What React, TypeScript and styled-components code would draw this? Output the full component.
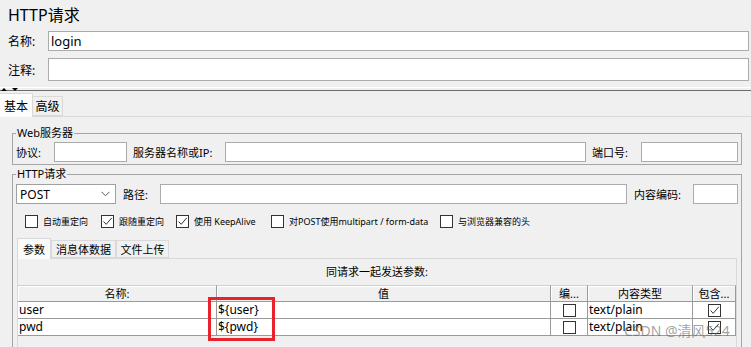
import styled, { createGlobalStyle } from "styled-components";

const GlobalStyle = createGlobalStyle`
  *{box-sizing:border-box;}
  html,body{margin:0;padding:0;overflow:hidden;background:#f0f0f0;}
  body{font-family:"Noto Sans","Noto Sans CJK SC",sans-serif;color:#000;}
`;

const Page = styled.div`
  position:relative;
  width:751px;
  height:347px;
  overflow:hidden;
`;
const Head = styled.div`
  padding:0 2px 0 8px;
`;
const Title = styled.h1`
  margin:0;
  height:30px;
  line-height:30px;
  font-size:16px;
  font-weight:400;
`;
const NameRow = styled.div<{ $mt: number }>`
  display:flex;
  align-items:center;
  margin-top:${(p) => p.$mt}px;
`;
const NameLabel = styled.span`
  width:40px;
  font-size:12px;
  flex:none;
`;
const TextBox = styled.input<{ $h: number; $w?: number }>`
  height:${(p) => p.$h}px;
  ${(p) => (p.$w ? `width:${p.$w}px;flex:none;` : "flex:1;")}
  min-width:0;
  border:1px solid #ababab;
  background:#fff;
  font-family:inherit;
  font-size:13px;
  padding:0 2px;
  outline:none;
  color:#000;
`;
const Splitter = styled.div`
  margin-top:6px;
  height:4px;
  border-top:1px solid #fff;
  border-bottom:1px solid #6b6b6b;
  display:flex;
  gap:5px;
  padding-left:1px;
  align-items:flex-start;
`;
const Arrow = styled.span<{ $up?: boolean }>`
  width:0;
  height:0;
  border-left:3px solid transparent;
  border-right:3px solid transparent;
  ${(p) => (p.$up ? "border-bottom:3px solid #000;" : "border-top:3px solid #000;")}
`;
const TopTabs = styled.div`
  margin-top:2px;
  height:23px;
  display:flex;
  align-items:flex-end;
  position:relative;
  z-index:1;
`;
const TopTab = styled.div<{ $active?: boolean; $w: number }>`
  width:${(p) => p.$w}px;
  height:${(p) => (p.$active ? 24 : 20)}px;
  margin-bottom:${(p) => (p.$active ? -1 : 0)}px;
  background:${(p) => (p.$active ? "#fdfdfd" : "#f0f0f0")};
  border:1px solid #d9d9d9;
  border-left:none;
  border-bottom:${(p) => (p.$active ? "none" : "1px solid #d9d9d9")};
  display:flex;
  align-items:center;
  justify-content:center;
  font-size:12px;
`;
const Panel = styled.div`
  border-top:1px solid #d9d9d9;
  padding:0 9px 0 12px;
`;
const Group = styled.fieldset<{ $mt: number; $pb: number }>`
  margin:${(p) => p.$mt}px 0 0;
  padding:0 3px ${(p) => p.$pb}px;
  border:1px solid #a5a5a5;
  min-width:0;
`;
const GroupTitle = styled.legend`
  padding:0 1px;
  font-size:11px;
  line-height:14px;
`;
const Row = styled.div<{ $mt: number }>`
  display:flex;
  align-items:center;
  height:20px;
  margin-top:${(p) => p.$mt}px;
`;
const FieldLabel = styled.span<{ $w: number; $ml?: number }>`
  width:${(p) => p.$w}px;
  margin-left:${(p) => p.$ml || 0}px;
  flex:none;
  font-size:11px;
  white-space:nowrap;
`;
const Select = styled.div`
  width:100px;
  height:20px;
  flex:none;
  border:1px solid #a0a0a0;
  background:#fff;
  display:flex;
  align-items:center;
  justify-content:space-between;
  padding:0 5px 0 3px;
  font-size:12px;
`;
const CheckRow = styled.div`
  display:flex;
  align-items:center;
  height:16px;
  margin-top:9px;
  padding-left:9px;
`;
const CheckItem = styled.div<{ $w?: number }>`
  display:flex;
  align-items:center;
  gap:5px;
  ${(p) => (p.$w ? `width:${p.$w}px;` : "")}
  flex:none;
  font-size:9px;
  white-space:nowrap;
`;
const Box = styled.span`
  width:13px;
  height:13px;
  flex:none;
  border:1px solid #333;
  background:#fff;
  display:flex;
  align-items:center;
  justify-content:center;
`;
const InnerTabs = styled.div`
  margin:9px 0 0 1px;
  height:20px;
  display:flex;
  align-items:flex-end;
  position:relative;
  z-index:1;
`;
const InnerTab = styled.div<{ $active?: boolean; $w: number }>`
  width:${(p) => p.$w}px;
  height:${(p) => (p.$active ? 21 : 18)}px;
  margin-bottom:${(p) => (p.$active ? -1 : 0)}px;
  background:${(p) => (p.$active ? "#fafafa" : "#f0f0f0")};
  border:1px solid #d9d9d9;
  border-bottom:${(p) => (p.$active ? "none" : "1px solid #d9d9d9")};
  display:flex;
  align-items:center;
  justify-content:center;
  font-size:11px;
`;
const ParamPanel = styled.div`
  margin:0 1px;
  height:130px;
  border:1px solid #d9d9d9;
`;
const Caption = styled.div`
  height:26px;
  line-height:26px;
  text-align:center;
  font-size:11px;
`;
const Table = styled.div`
  position:relative;
  display:grid;
  grid-template-columns:199px 334px 37px 105px 43px;
`;
const HeadCell = styled.div`
  height:17px;
  background:#f0f0f0;
  border-top:1px solid #cfcfcf;
  border-right:1px solid #9a9a9a;
  border-bottom:1px solid #9a9a9a;
  box-shadow:inset 1px 1px 0 #fff;
  font-size:11px;
  line-height:15px;
  text-align:center;
  white-space:nowrap;
  overflow:hidden;
`;
const Cell = styled.div<{ $center?: boolean }>`
  height:17px;
  background:#fff;
  border-right:1px solid #9a9a9a;
  border-bottom:1px solid #9a9a9a;
  font-size:12px;
  line-height:16px;
  padding-left:1px;
  display:flex;
  align-items:center;
  justify-content:${(p) => (p.$center ? "center" : "flex-start")};
`;
const Mark = styled.div`
  position:absolute;
  left:190px;
  top:12px;
  width:67px;
  height:44px;
  border:3px solid #e8232b;
`;
const Watermark = styled.div`
  position:absolute;
  z-index:2;
  left:624px;
  top:320px;
  font-size:14px;
  color:rgba(100,100,100,0.6);
  white-space:nowrap;
`;

function Tick() {
  return (
    <svg width="11" height="11" viewBox="0 0 11 11">
      <polyline points="1.5,5.5 4.2,8.3 9.8,1.8" fill="none" stroke="#333" strokeWidth="1" />
    </svg>
  );
}

function Check({ on }: { on?: boolean }) {
  return <Box>{on && <Tick />}</Box>;
}

const params = [
  { name: "user", value: "${user}", type: "text/plain" },
  { name: "pwd", value: "${pwd}", type: "text/plain" },
];

export default function App() {
  return (
    <Page>
      <GlobalStyle />
      <Head>
        <Title>HTTP请求</Title>
        <NameRow $mt={1}>
          <NameLabel>名称:</NameLabel>
          <TextBox $h={20} defaultValue="login" />
        </NameRow>
        <NameRow $mt={7}>
          <NameLabel>注释:</NameLabel>
          <TextBox $h={23} />
        </NameRow>
      </Head>
      <Splitter>
        <Arrow $up />
        <Arrow />
      </Splitter>
      <TopTabs>
        <TopTab $active $w={33}>基本</TopTab>
        <TopTab $w={30}>高级</TopTab>
      </TopTabs>
      <Panel>
        <Group $mt={9} $pb={2}>
          <GroupTitle>Web服务器</GroupTitle>
          <Row $mt={2}>
            <FieldLabel $w={38}>协议:</FieldLabel>
            <TextBox $h={20} $w={73} />
            <FieldLabel $w={92} $ml={6}>服务器名称或IP:</FieldLabel>
            <TextBox $h={20} />
            <FieldLabel $w={49} $ml={6}>端口号:</FieldLabel>
            <TextBox $h={20} $w={97} />
          </Row>
        </Group>
        <Group $mt={2} $pb={0}>
          <GroupTitle>HTTP请求</GroupTitle>
          <Row $mt={3}>
            <Select>
              POST
              <svg width="9" height="6" viewBox="0 0 9 6">
                <polyline points="0.5,0.8 4.5,4.8 8.5,0.8" fill="none" stroke="#555" strokeWidth="1" />
              </svg>
            </Select>
            <FieldLabel $w={37} $ml={7}>路径:</FieldLabel>
            <TextBox $h={20} />
            <FieldLabel $w={59} $ml={7}>内容编码:</FieldLabel>
            <TextBox $h={20} $w={45} />
          </Row>
          <CheckRow>
            <CheckItem $w={76}><Check />自动重定向</CheckItem>
            <CheckItem $w={75}><Check on />跟随重定向</CheckItem>
            <CheckItem $w={95}><Check on />使用 KeepAlive</CheckItem>
            <CheckItem $w={169}><Check />对POST使用multipart / form-data</CheckItem>
            <CheckItem><Check />与浏览器兼容的头</CheckItem>
          </CheckRow>
          <InnerTabs>
            <InnerTab $active $w={34}>参数</InnerTab>
            <InnerTab $w={65}>消息体数据</InnerTab>
            <InnerTab $w={53}>文件上传</InnerTab>
          </InnerTabs>
          <ParamPanel>
            <Caption>同请求一起发送参数:</Caption>
            <Table>
              <HeadCell>名称:</HeadCell>
              <HeadCell>值</HeadCell>
              <HeadCell>编...</HeadCell>
              <HeadCell>内容类型</HeadCell>
              <HeadCell>包含...</HeadCell>
              {params.map((p) => (
                <>
                  <Cell key={p.name + "n"}>{p.name}</Cell>
                  <Cell key={p.name + "v"}>{p.value}</Cell>
                  <Cell key={p.name + "e"} $center><Check /></Cell>
                  <Cell key={p.name + "t"}>{p.type}</Cell>
                  <Cell key={p.name + "i"} $center><Check on /></Cell>
                </>
              ))}
              <Mark />
            </Table>
          </ParamPanel>
        </Group>
      </Panel>
      <Watermark>CSDN @清风524</Watermark>
    </Page>
  );
}
